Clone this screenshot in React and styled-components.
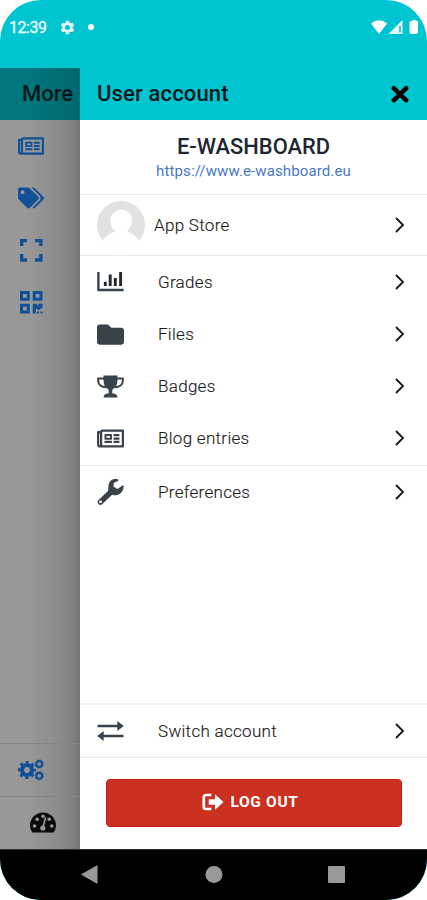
import React from 'react';
import styled, { createGlobalStyle } from 'styled-components';
import { FaRegNewspaper, FaTags, FaFolder } from 'react-icons/fa';
import { MdSettings } from 'react-icons/md';

const GlobalStyle = createGlobalStyle`
  * { box-sizing: border-box; }
  body { margin: 0; background: #fff; font-family: Roboto, sans-serif; }
`;

const Phone = styled.div`
  width: 427px;
  height: 900px;
  display: flex;
  flex-direction: column;
  overflow: hidden;
  border-radius: 41px;
  background: #00c4cf;
`;

const StatusBar = styled.div`
  height: 68px;
  flex: none;
  display: flex;
  align-items: flex-start;
  padding: 18px 7px 0 9px;
  color: #e9fdff;
`;

const Clock = styled.span`
  width: 50px;
  font-size: 16px;
  line-height: 20px;
  letter-spacing: -0.45px;
  -webkit-text-stroke: 0.3px #e9fdff;
`;

const StatusDot = styled.span`
  width: 6px;
  height: 6px;
  margin: 6px 0 0 12px;
  border-radius: 50%;
  background: #fff;
`;

const StatusGear = styled(MdSettings)`
  width: 17px;
  height: 17px;
  margin-top: 1px;
`;

const StatusIcons = styled.svg`
  margin-left: auto;
  width: 50px;
  height: 16px;
  margin-top: 1px;
`;

const Body = styled.div`
  flex: 1;
  min-height: 0;
  display: flex;
`;

const Side = styled.aside`
  width: 80px;
  flex: none;
  display: flex;
  flex-direction: column;
  background: linear-gradient(90deg, #999 0%, #989898 35%, #8d8d8d 70%, #808080 92%, #747474 100%);
`;

const SideHeader = styled.div`
  height: 52px;
  flex: none;
  padding-left: 22px;
  overflow: hidden;
  background: linear-gradient(90deg, #00767d 0%, #00757c 40%, #00686e 100%);
  color: #061719;
  font-size: 22px;
  font-weight: 500;
  line-height: 52px;
`;

const SideItem = styled.div`
  height: 52px;
  flex: none;
  display: flex;
  align-items: center;
  padding-left: 18px;
  color: #114f96;
`;

const SideFooter = styled.div`
  margin-top: auto;
  border-top: 1px solid #858585;
`;

const TabItem = styled.div`
  height: 53px;
  border-top: 1px solid #858585;
  display: flex;
  align-items: center;
  padding-left: 30px;
  color: #0b0b0b;
`;

const Drawer = styled.main`
  flex: 1;
  min-width: 0;
  display: flex;
  flex-direction: column;
  background: #fff;
`;

const DrawerHeader = styled.header`
  height: 52px;
  flex: none;
  display: flex;
  align-items: center;
  justify-content: space-between;
  padding: 0 17px;
  background: #00c4cf;
  color: #061719;
`;

const Title = styled.h1`
  margin: 0;
  font-size: 22px;
  line-height: 26px;
  padding-bottom: 1px;
  font-weight: 500;
  letter-spacing: 0.15px;
`;

const Site = styled.section`
  height: 75px;
  flex: none;
  display: flex;
  flex-direction: column;
  align-items: center;
  padding-top: 14px;
  border-bottom: 1px solid #e9e9e9;
`;

const SiteName = styled.div`
  font-size: 21.9px;
  line-height: 26px;
  font-weight: 500;
  color: #202632;
`;

const SiteLink = styled.div`
  font-size: 15px;
  line-height: 20px;
  margin-top: 1px;
  letter-spacing: 0.12px;
  color: #4a77c8;
`;

const UserRow = styled.div`
  height: 61px;
  flex: none;
  display: flex;
  align-items: center;
  padding: 0 22px 0 17px;
  border-bottom: 1px solid #e9e9e9;
`;

const Row = styled.div`
  height: 52px;
  flex: none;
  display: flex;
  align-items: center;
  padding: 0 22px 0 17px;
  color: #3a434a;
`;

const MainMenu = styled.div`
  height: 209px;
  flex: none;
`;

const Label = styled.span`
  flex: 1;
  margin-left: ${(p) => p.$gap || 34}px;
  font-size: 17px;
  line-height: 22px;
  font-weight: 300;
  letter-spacing: 0.3px;
  color: #1c1c1c;
  -webkit-text-stroke: 0.15px #1c1c1c;
`;

const Divider = styled.div`
  height: 1px;
  flex: none;
  background: #e7e7e7;
`;

const Footer = styled.footer`
  margin-top: auto;
  border-top: 2px solid #efefef;
`;

const LogoutArea = styled.div`
  height: 91px;
  padding: 21px 25px 0 26px;
`;

const Logout = styled.button`
  display: flex;
  align-items: center;
  justify-content: center;
  gap: 6px;
  width: 100%;
  height: 48px;
  padding: 0 7px 2px 0;
  border: 1px solid #cb1f18;
  border-radius: 4px;
  background: #ca3120;
  color: #fff;
  font: 700 15.5px Roboto, sans-serif;
  letter-spacing: 0.65px;
`;

const NavBar = styled.nav`
  height: 51px;
  flex: none;
  background: #000;
  border-top: 1px solid #303030;
`;

const NavIcons = styled.svg`
  display: block;
  width: 427px;
  height: 50px;
`;

const Svg = styled.svg`
  display: block;
  flex: none;
`;

function ExpandIcon() {
  return (
    <Svg width="26" height="26" viewBox="0 0 26 26" fill="none" stroke="currentColor" strokeWidth="3.4">
      <path d="M3.7 9V3.6H9M17 3.6h5.9V9M22.9 17v6H17M9 23H3.7v-6" />
    </Svg>
  );
}

function QrIcon() {
  return (
    <Svg width="26" height="26" viewBox="0 0 26 26">
      <g fill="none" stroke="currentColor" strokeWidth="3">
        <path d="M3.5 3.5h6.8v6.8H3.5zM16.2 3.5h6.8v6.8h-6.8zM3.5 16.2h6.8v6.8H3.5z" />
      </g>
      <path fill="currentColor" d="M14.7 14.7h3.6l2 2v-2h4.2v4.6h-2v1.4h-3.2l-1.4-1.4v5.2h-3.2zM19 22.4h2v2.1h-2zM22.5 22.4h2v2.1h-2z" />
    </Svg>
  );
}

function GearsIcon() {
  return (
    <Svg width="26" height="26" viewBox="0 0 26 26" fill="none" stroke="currentColor">
      <circle cx="9" cy="13" r="5" strokeWidth="4.2" />
      <circle cx="9" cy="13" r="7.9" strokeWidth="2.4" strokeDasharray="3.1 3.1" strokeDashoffset="1.5" />
      <circle cx="21.2" cy="7" r="2.9" strokeWidth="2.1" />
      <circle cx="21.2" cy="7" r="4.2" strokeWidth="1" strokeDasharray="1.6 1.7" />
      <circle cx="21.2" cy="18.800" r="2.9" strokeWidth="2.1" />
      <circle cx="21.2" cy="18.800" r="4.2" strokeWidth="1" strokeDasharray="1.6 1.7" />
    </Svg>
  );
}

function DashboardIcon() {
  return (
    <Svg width="26" height="26" viewBox="0 0 26 26">
      <path d="M2.200 22.500A13 13 0 0 1 0 15.500a13 13 0 0 1 26 0 13 13 0 0 1-2.200 7z" fill="currentColor" />
      <g fill="#989898">
        <circle cx="4.500" cy="16" r="1.800" />
        <circle cx="7.200" cy="9.200" r="1.800" />
        <circle cx="13" cy="6.200" r="1.800" />
        <circle cx="19.200" cy="9.200" r="1.800" />
        <circle cx="21.800" cy="16" r="1.800" />
        <circle cx="12.800" cy="18" r="2.600" />
      </g>
      <path d="m13 17 2.500-9" stroke="#989898" strokeWidth="1.700" strokeLinecap="round" />
    </Svg>
  );
}

function ChartIcon() {
  return (
    <Svg width="27" height="26" viewBox="0 0 27 26" fill="none" stroke="currentColor">
      <path d="M1.4 3v18h25.2" strokeWidth="2.4" strokeLinejoin="round" />
      <path d="M8.3 12.7v4.4M13.2 5.4v11.7M18.3 9v8.1M23.6 3v14.1" strokeWidth="2.900" stroke="#22282e" />
    </Svg>
  );
}

function TrophyIcon() {
  return (
    <Svg width="27" height="26" viewBox="0 0 27 26">
      <path d="M7 5.500H1.200V8c0 3.500 3.300 6 7.800 6.300M20 5.500h5.800V8c0 3.500-3.300 6-7.800 6.300" fill="none" stroke="currentColor" strokeWidth="2" />
      <path d="M6.500 2.500h14v4.200c0 5-1.700 8-5.200 10v3.500c3 .4 5 1.400 5 3v1.300H6.700v-1.300c0-1.600 2-2.600 5-3v-3.500c-3.500-2-5.200-5-5.200-10z" fill="currentColor" />
    </Svg>
  );
}

function WrenchIcon() {
  return (
    <Svg width="27" height="26" viewBox="0 0 27 26">
      <path d="M3.500 23 14.500 12.500" stroke="currentColor" strokeWidth="5.600" strokeLinecap="round" />
      <path d="M20.800.2c-5-1.400-9.500 2.300-9.300 7l-.4 4.500 4.200 4c4.400 1.700 10.500-.6 11.400-8l-.6-1.600-5.600 4-3.900-2.300.1-3.700 5-2.700z" fill="currentColor" />
      <circle cx="3.500" cy="22.800" r="1.400" fill="#fff" />
    </Svg>
  );
}

function SwitchIcon() {
  return (
    <Svg width="27" height="26" viewBox="0 0 27 26">
      <path d="M.5 8H22M5 18h21.5" stroke="currentColor" strokeWidth="2.5" />
      <path d="M20.300 3v10l6.500-5zM6.700 13v10L.3 18z" fill="currentColor" />
    </Svg>
  );
}

function LogoutIcon() {
  return (
    <Svg width="22" height="20" viewBox="0 0 22 20">
      <path d="M9.300 3H4a2.200 2.200 0 0 0-2.200 2.200v9.600A2.200 2.200 0 0 0 4 17h5.300" fill="none" stroke="currentColor" strokeWidth="2.700" />
      <path d="M6.700 7.200h6.300V2.200l8.500 7.800-8.500 7.800v-5H6.700z" fill="currentColor" />
    </Svg>
  );
}

function Chevron() {
  return (
    <Svg width="10" height="18" viewBox="0 0 10 18" fill="none" stroke="#161616" strokeWidth="1.800">
      <path d="M1.5 2.500 8 9l-6.500 6.500" strokeLinecap="round" strokeLinejoin="miter" />
    </Svg>
  );
}

function Avatar() {
  return (
    <Svg width="48" height="48" viewBox="0 0 48 48">
      <defs><clipPath id="avatar-clip"><circle cx="24" cy="24" r="24" /></clipPath></defs>
      <g clipPath="url(#avatar-clip)">
        <rect width="48" height="48" fill="#e2e2e2" />
        <ellipse cx="24.2" cy="20" rx="10.8" ry="11.5" fill="#fff" />
        <path d="M18 28v2.5C10 33 6.500 38 4.500 42L0 48h48l-4.500-6C41.500 38 38 33 30.500 30.500V28z" fill="#fff" />
      </g>
    </Svg>
  );
}

function MenuRow({ icon, children }) {
  return (
    <Row>
      {icon}
      <Label>{children}</Label>
      <Chevron />
    </Row>
  );
}

export default function App() {
  return (
    <>
      <GlobalStyle />
      <Phone>
        <StatusBar>
          <Clock>12:39</Clock>
          <StatusGear />
          <StatusDot />
          <StatusIcons viewBox="0 0 50 16">
            <path d="M1 4.600Q9-2 17 4.600L9 15z" fill="#fff" />
            <path d="M32.500 1v14h-14z" fill="#e4fafb" />
            <path d="M29 7h2v6.500h-2z" fill="#3dc4cc" />
            <path d="M42 1.200h4.500v1H48V13a2 2 0 0 1-2 2h-4.500a2 2 0 0 1-2-2V3.200a1 1 0 0 1 1-1H42z" fill="#fff" />
          </StatusIcons>
        </StatusBar>
        <Body>
          <Side>
            <SideHeader>More</SideHeader>
            <SideItem><FaRegNewspaper size={26} /></SideItem>
            <SideItem><FaTags size={26} /></SideItem>
            <SideItem><ExpandIcon /></SideItem>
            <SideItem><QrIcon /></SideItem>
            <SideFooter>
              <SideItem><GearsIcon /></SideItem>
              <TabItem><DashboardIcon /></TabItem>
            </SideFooter>
          </Side>
          <Drawer>
            <DrawerHeader>
              <Title>User account</Title>
              <Svg width="20" height="20" viewBox="0 0 20 20" stroke="#000" strokeWidth="4.500" strokeLinecap="round">
                <path d="M3.700 4.200 16.300 16.300M16.300 4.200 3.700 16.300" />
              </Svg>
            </DrawerHeader>
            <Site>
              <SiteName>E-WASHBOARD</SiteName>
              <SiteLink>https://www.e-washboard.eu</SiteLink>
            </Site>
            <UserRow>
              <Avatar />
              <Label $gap={9}>App Store</Label>
              <Chevron />
            </UserRow>
            <MainMenu>
              <MenuRow icon={<ChartIcon />}>Grades</MenuRow>
              <MenuRow icon={<FaFolder size={27} />}>Files</MenuRow>
              <MenuRow icon={<TrophyIcon />}>Badges</MenuRow>
              <MenuRow icon={<FaRegNewspaper size={27} />}>Blog entries</MenuRow>
            </MainMenu>
            <Divider />
            <MenuRow icon={<WrenchIcon />}>Preferences</MenuRow>
            <Footer>
              <MenuRow icon={<SwitchIcon />}>Switch account</MenuRow>
              <Divider />
              <LogoutArea>
                <Logout><LogoutIcon />LOG OUT</Logout>
              </LogoutArea>
            </Footer>
          </Drawer>
        </Body>
        <NavBar>
          <NavIcons viewBox="0 0 427 50" fill="#999">
            <path d="M97.500 15v19L81 24.500z" />
            <circle cx="214" cy="24.500" r="8.500" />
            <rect x="328" y="16" width="17" height="17" rx="1" />
          </NavIcons>
        </NavBar>
      </Phone>
    </>
  );
}
